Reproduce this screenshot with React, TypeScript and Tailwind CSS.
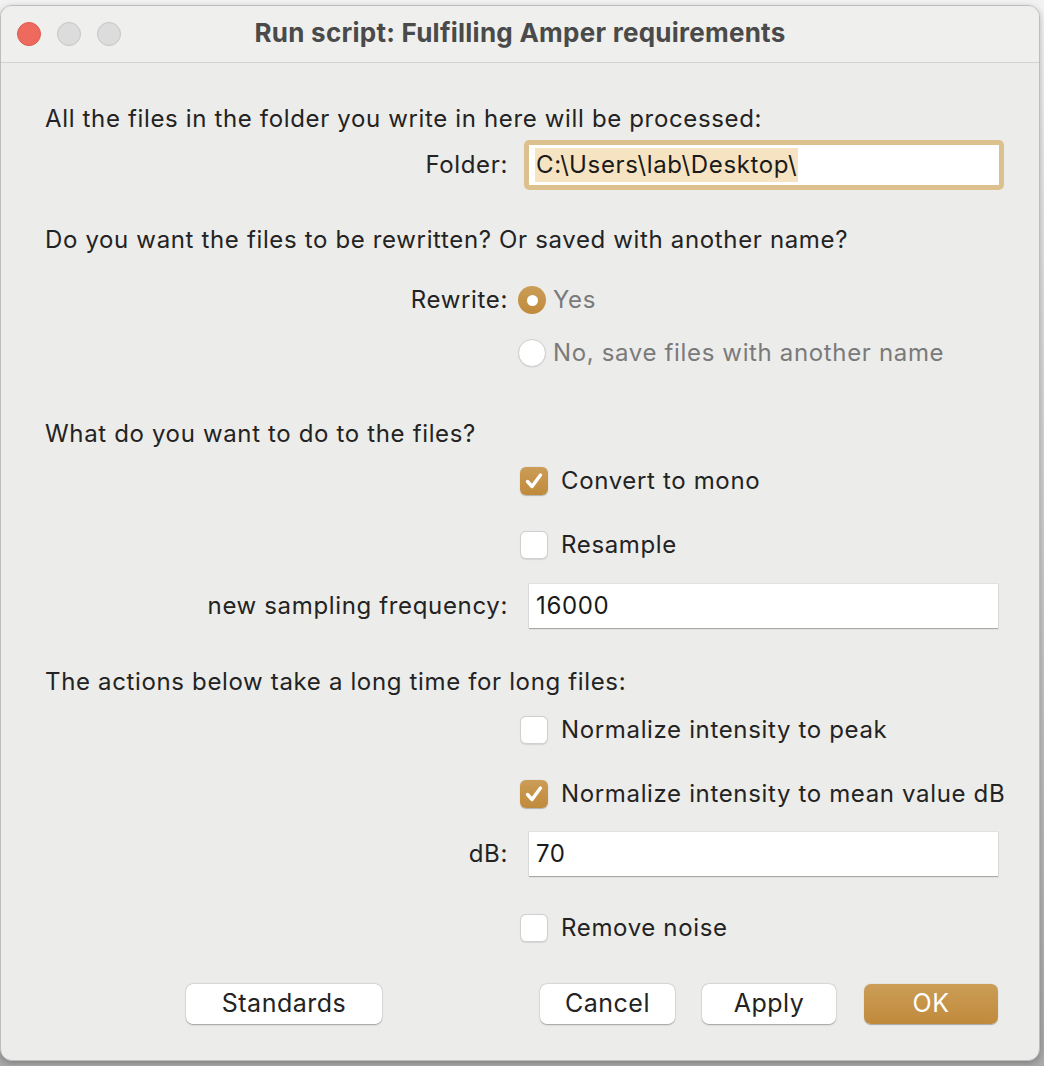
import React from "react";

const font = { fontFamily: 'Inter, "Liberation Sans", Arial, sans-serif' };

function Checkbox({ checked }: { checked: boolean }) {
  if (checked) {
    return (
      <span className="ml-[2px] flex h-[28px] w-[28px] shrink-0 items-center justify-center rounded-[6px] bg-[linear-gradient(#cb9d57,#c08a3b)] shadow-[0_0.5px_1px_rgba(0,0,0,0.25)]">
        <svg width="22" height="22" viewBox="0 0 22 22">
          <path d="M4.5 11.5 L9 16.5 L17.5 5" fill="none" stroke="white" strokeWidth="3.4" strokeLinecap="round" strokeLinejoin="round" />
        </svg>
      </span>
    );
  }
  return (
    <span className="ml-[2px] block h-[28px] w-[28px] shrink-0 rounded-[6px] border border-[#d0d0d0] bg-white shadow-[0_0.5px_1px_rgba(0,0,0,0.1)]" />
  );
}

function Radio({ checked }: { checked: boolean }) {
  if (checked) {
    return (
      <span className="flex h-[28px] w-[28px] shrink-0 items-center justify-center rounded-full bg-[linear-gradient(#cb9d57,#c08a3b)]">
        <span className="block h-[11px] w-[11px] rounded-full bg-white" />
      </span>
    );
  }
  return <span className="block h-[28px] w-[28px] shrink-0 rounded-full border border-[#cfcfcf] bg-white shadow-[0_0.5px_1px_rgba(0,0,0,0.1)]" />;
}

function CheckRow({ checked, label, mt }: { checked: boolean; label: string; mt: string }) {
  return (
    <div className={`grid h-[40px] grid-cols-[463px_1fr] gap-x-[10px] ${mt}`}>
      <div />
      <div className="flex items-center gap-[13px]">
        <Checkbox checked={checked} />
        <span className="whitespace-nowrap text-[24px] text-[#232323]">{label}</span>
      </div>
    </div>
  );
}

function FieldRow({ label, value, mt }: { label: string; value: string; mt: string }) {
  return (
    <div className={`grid h-[44px] grid-cols-[463px_1fr] gap-x-[10px] ${mt}`}>
      <div className="flex items-center justify-end whitespace-nowrap text-[24px] text-[#232323]">{label}</div>
      <div className="flex items-stretch">
        <div className="ml-[11px] flex w-[469px] items-center bg-white pl-[7px] text-[24px] text-[#1a1a1a] shadow-[0_1px_1px_rgba(0,0,0,0.25),0_0_0_0.5px_rgba(0,0,0,0.08)]">
          {value}
        </div>
      </div>
    </div>
  );
}

function Button({ label, primary, className }: { label: string; primary?: boolean; className?: string }) {
  return (
    <button
      className={`flex h-[40px] shrink-0 items-center justify-center rounded-[7px] text-[25px] tracking-[0.5px] ${
        primary
          ? "bg-[linear-gradient(#cb9d57,#c08a3b)] text-white shadow-[0_0.5px_1px_rgba(0,0,0,0.3)]"
          : "bg-white text-[#232323] shadow-[0_0.5px_1.5px_rgba(0,0,0,0.3),0_0_0_0.5px_rgba(0,0,0,0.06)]"
      } ${className ?? ""}`}
    >
      {label}
    </button>
  );
}

export default function App() {
  return (
    <div
      className="h-[1066px] w-[1044px] overflow-hidden bg-[linear-gradient(#f2f2f2_0px,#f2f2f2_20px,#a9a9a9_1040px)] pt-[5px]"
      style={font}
    >
      <div className="flex h-[1056px] w-[1040px] flex-col overflow-hidden rounded-[12px] border border-[#bdbdbd] bg-[#ececea] shadow-[0_2px_6px_rgba(0,0,0,0.25)]">
        {/* title bar */}
        <div className="relative flex h-[57px] shrink-0 items-center justify-center border-b border-[#d3d3d1] bg-[#efefed] pb-[3px]">
          <div className="absolute left-[16px] top-[16px] flex gap-[16px]">
            <span className="block h-[24px] w-[24px] rounded-full border border-[#dc5a4e] bg-[#ee6a5e]" />
            <span className="block h-[24px] w-[24px] rounded-full border border-[#c6c6c6] bg-[#dcdcdc]" />
            <span className="block h-[24px] w-[24px] rounded-full border border-[#c6c6c6] bg-[#dcdcdc]" />
          </div>
          <span className="text-[26px] font-bold tracking-[0.25px] text-[#4a4a4a]">Run script: Fulfilling Amper requirements</span>
        </div>

        {/* body */}
        <div className="flex flex-col px-[44px] tracking-[0.65px]">
          <div className="mt-[34px] flex h-[43px] items-center text-[24px] text-[#232323]">
            All the files in the folder you write in here will be processed:
          </div>

          <div className="grid h-[50px] grid-cols-[463px_1fr] gap-x-[10px]">
            <div className="flex items-center justify-end text-[24px] text-[#232323]">Folder:</div>
            <div className="flex items-center">
              <div className="ml-[6px] flex h-[50px] w-[480px] items-center rounded-[5px] bg-white shadow-[inset_0_0_0_5px_#dcc08d]">
                <span className="ml-[11px] bg-[#f5e3c2] px-[1px] text-[24px] leading-[34px] text-[#1a1a1a]">C:\Users\lab\Desktop\</span>
              </div>
            </div>
          </div>

          <div className="mt-[30px] flex h-[40px] items-center whitespace-nowrap text-[24px] text-[#232323]">
            Do you want the files to be rewritten? Or saved with another name?
          </div>

          <div className="mt-[20px] grid h-[40px] grid-cols-[463px_1fr] gap-x-[10px]">
            <div className="flex items-center justify-end text-[24px] text-[#232323]">Rewrite:</div>
            <div className="flex items-center gap-[7px]">
              <Radio checked />
              <span className="text-[24px] text-[#7a7a7a]">Yes</span>
            </div>
          </div>
          <div className="mt-[13px] grid h-[40px] grid-cols-[463px_1fr] gap-x-[10px]">
            <div />
            <div className="flex items-center gap-[7px]">
              <Radio checked={false} />
              <span className="whitespace-nowrap text-[24px] text-[#7a7a7a]">No, save files with another name</span>
            </div>
          </div>

          <div className="mt-[41px] flex h-[40px] items-center text-[24px] text-[#232323]">
            What do you want to do to the files?
          </div>
          <CheckRow checked label="Convert to mono" mt="mt-[7px]" />
          <CheckRow checked={false} label="Resample" mt="mt-[24px]" />
          <FieldRow label="new sampling frequency:" value="16000" mt="mt-[19px]" />

          <div className="mt-[34px] flex h-[40px] items-center text-[24px] text-[#232323]">
            The actions below take a long time for long files:
          </div>
          <CheckRow checked={false} label="Normalize intensity to peak" mt="mt-[8px]" />
          <CheckRow checked label="Normalize intensity to mean value dB" mt="mt-[24px]" />
          <FieldRow label="dB:" value="70" mt="mt-[18px]" />
          <CheckRow checked={false} label="Remove noise" mt="mt-[32px]" />

          <div className="mt-[36px] flex items-center">
            <Button label="Standards" className="ml-[141px] w-[196px]" />
            <Button label="Cancel" className="ml-[158px] w-[135px]" />
            <Button label="Apply" className="ml-[27px] w-[134px]" />
            <Button label="OK" primary className="ml-[28px] w-[134px]" />
          </div>
        </div>
      </div>
    </div>
  );
}
